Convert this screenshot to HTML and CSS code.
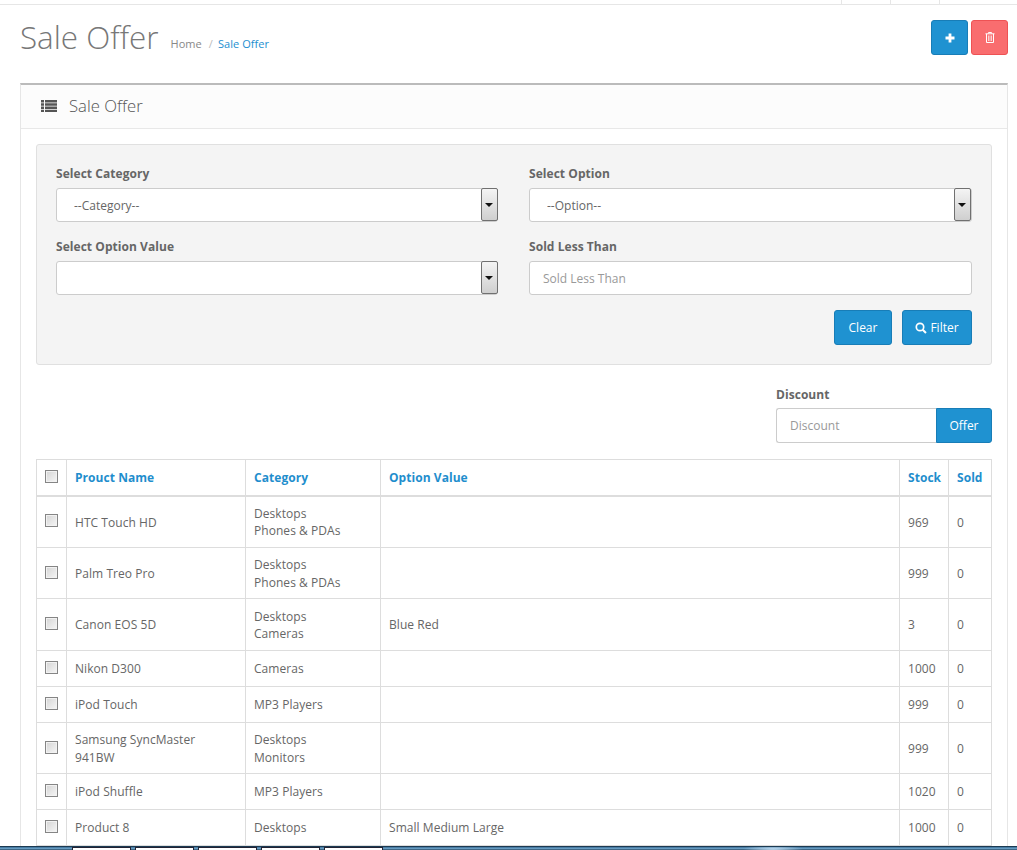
FILE: index.html
```html
<!DOCTYPE html>
<html lang="en">
<head>
  <meta charset="UTF-8" />
  <title>Sale Offer</title>
  <link rel="stylesheet" href="styles.css">
</head>
<body>
  <div class="top-bar">
    <span class="top-cell"></span>
    <span class="top-cell"></span>
    <span class="top-cell"></span>
  </div>

  <div class="content">
    <div class="page-header">
      <h1>Sale Offer</h1>
      <ul class="breadcrumb">
        <li>Home</li>
        <li class="sep">/</li>
        <li class="active">Sale Offer</li>
      </ul>
      <div class="header-actions">
        <button class="btn btn-blue btn-square">
          <svg width="10" height="10" viewBox="0 0 10 10"><path d="M3.6 0.5h2.8v3.1h3.1v2.8H6.4v3.1H3.6V6.4H0.5V3.6h3.1z" fill="#fff"/></svg>
        </button>
        <button class="btn btn-red btn-square">
          <svg width="10" height="11" viewBox="0 0 10 11"><path d="M3.5 1.5V.5h3v1M.5 1.8h9M1.5 2v8.5h7V2" fill="none" stroke="#fff"/><path d="M3.5 3.5v5.5M5 3.5v5.5M6.5 3.5v5.5" stroke="#fbd0d0"/></svg>
        </button>
      </div>
    </div>

    <div class="panel">
      <div class="panel-heading">
        <svg class="list-icon" width="16" height="12" viewBox="0 0 16 12"><path d="M0 0h3v2.5H0zM4 0h12v2.5H4zM0 3.2h3v2.6H0zM4 3.2h12v2.6H4zM0 6.5h3v2.5H0zM4 6.5h12v2.5H4zM0 9.7h3V12H0zM4 9.7h12V12H4z" fill="#555"/></svg>
        <span>Sale Offer</span>
      </div>

      <div class="panel-body">
        <div class="filter-box">
          <div class="filter-grid">
            <div class="field">
              <label>Select Category</label>
              <div class="select-wrap">
                <select><option>--Category--</option></select>
                <span class="select-arrow"></span>
              </div>
            </div>
            <div class="field">
              <label>Select Option</label>
              <div class="select-wrap">
                <select><option>--Option--</option></select>
                <span class="select-arrow"></span>
              </div>
            </div>
            <div class="field">
              <label>Select Option Value</label>
              <div class="select-wrap">
                <select><option></option></select>
                <span class="select-arrow"></span>
              </div>
            </div>
            <div class="field">
              <label>Sold Less Than</label>
              <input type="text" class="text-input" placeholder="Sold Less Than">
            </div>
          </div>
          <div class="filter-actions">
            <button class="btn btn-blue btn-clear">Clear</button>
            <button class="btn btn-blue btn-filter">
              <svg width="12" height="12" viewBox="0 0 12 12"><circle cx="5" cy="5" r="3.7" fill="none" stroke="#fff" stroke-width="1.7"/><path d="M7.7 7.7L11 11" stroke="#fff" stroke-width="2"/></svg>
              Filter
            </button>
          </div>
        </div>

        <div class="discount-row">
          <div class="discount">
            <label>Discount</label>
            <div class="input-group">
              <input type="text" class="text-input" placeholder="Discount">
              <button class="btn btn-blue btn-offer">Offer</button>
            </div>
          </div>
        </div>

        <table class="offer-table">
          <colgroup>
            <col class="c-check"><col class="c-name"><col class="c-cat"><col><col class="c-stock"><col class="c-sold">
          </colgroup>
          <thead>
            <tr>
              <th><input type="checkbox"></th>
              <th>Prouct Name</th>
              <th>Category</th>
              <th>Option Value</th>
              <th>Stock</th>
              <th>Sold</th>
            </tr>
          </thead>
          <tbody>
            <tr class="taller">
              <td><input type="checkbox"></td>
              <td>HTC Touch HD</td>
              <td>Desktops<br>Phones &amp; PDAs</td>
              <td></td><td>969</td><td>0</td>
            </tr>
            <tr class="tall">
              <td><input type="checkbox"></td>
              <td>Palm Treo Pro</td>
              <td>Desktops<br>Phones &amp; PDAs</td>
              <td></td><td>999</td><td>0</td>
            </tr>
            <tr class="taller">
              <td><input type="checkbox"></td>
              <td>Canon EOS 5D</td>
              <td>Desktops<br>Cameras</td>
              <td>Blue Red</td><td>3</td><td>0</td>
            </tr>
            <tr>
              <td><input type="checkbox"></td>
              <td>Nikon D300</td>
              <td>Cameras</td>
              <td></td><td>1000</td><td>0</td>
            </tr>
            <tr>
              <td><input type="checkbox"></td>
              <td>iPod Touch</td>
              <td>MP3 Players</td>
              <td></td><td>999</td><td>0</td>
            </tr>
            <tr class="tall">
              <td><input type="checkbox"></td>
              <td>Samsung SyncMaster<br>941BW</td>
              <td>Desktops<br>Monitors</td>
              <td></td><td>999</td><td>0</td>
            </tr>
            <tr>
              <td><input type="checkbox"></td>
              <td>iPod Shuffle</td>
              <td>MP3 Players</td>
              <td></td><td>1020</td><td>0</td>
            </tr>
            <tr>
              <td><input type="checkbox"></td>
              <td>Product 8</td>
              <td>Desktops</td>
              <td>Small Medium Large</td><td>1000</td><td>0</td>
            </tr>
          </tbody>
        </table>
      </div>
    </div>
  </div>

  <div class="taskbar">
    <span class="task"></span>
    <span class="task"></span>
    <span class="task"></span>
    <span class="task"></span>
    <span class="task"></span>
  </div>
</body>
</html>
```

FILE: styles.css
```css
* {
  box-sizing: border-box;
}

html, body {
  height: 850px;
  margin: 0;
  overflow: hidden;
}

body {
  display: flex;
  flex-direction: column;
  background: #fff;
  color: #666;
  font-family: 'Open Sans', sans-serif;
  font-size: 12px;
  letter-spacing: 0.05px;
}

/* top strip */
.top-bar {
  flex: none;
  height: 5px;
  display: flex;
  justify-content: flex-end;
  padding-right: 29px;
  border-bottom: 1px solid #e6e6e6;
}

.top-cell {
  width: 49px;
  border-left: 1px solid #e6e6e6;
}

.content {
  flex: 1;
  min-height: 0;
  overflow: hidden;
  padding: 0 9px 0 20px;
}

/* page header */
.page-header {
  height: 78px;
  display: flex;
  align-items: flex-start;
}

h1 {
  margin: 11px 0 0;
  font-size: 31.4px;
  font-weight: 300;
  line-height: 42px;
  letter-spacing: 0;
  color: #777;
}

.breadcrumb {
  list-style: none;
  display: flex;
  margin: 0;
  padding: 30px 0 0 12px;
  font-size: 11px;
  line-height: 18px;
  color: #888;
}

.breadcrumb .sep {
  margin: 0 5px 0 7px;
  color: #bbb;
}

.breadcrumb .active {
  color: #1d8fd0;
}

.header-actions {
  margin-left: auto;
  padding-top: 15px;
  display: flex;
  gap: 3px;
}

/* buttons */
.btn {
  display: inline-flex;
  align-items: center;
  justify-content: center;
  padding: 0;
  border-radius: 3px;
  font-family: inherit;
  font-size: 12px;
  color: #fff;
  cursor: pointer;
}

.btn-blue {
  background: #1f92d1;
  border: 1px solid #187db7;
}

.btn-red {
  background: #f96d6f;
  border: 1px solid #ee5254;
}

.btn-square {
  width: 37px;
  height: 35px;
}

/* panel */
.panel {
  border: 1px solid #e6e6e6;
  border-top: 2px solid #bbb;
  border-bottom: 0;
}

.panel-heading {
  height: 44px;
  display: flex;
  align-items: center;
  padding: 0 0 2px 20px;
  background: #fcfcfc;
  border-bottom: 1px solid #e8e8e8;
  font-size: 16.7px;
  font-weight: 300;
  letter-spacing: 0;
  color: #555;
}

.list-icon {
  margin-right: 12px;
}

.panel-body {
  padding: 15px 15px 0;
}

/* filter box */
.filter-box {
  height: 221px;
  padding: 20px 19px 0;
  background: #f4f4f4;
  border: 1px solid #e0e0e0;
  border-radius: 3px;
}

.filter-grid {
  display: grid;
  grid-template-columns: 442px 443px;
  column-gap: 31px;
  row-gap: 16px;
}

label {
  display: block;
  margin-bottom: 5px;
  font-weight: 700;
  line-height: 18px;
  color: #666;
}

.select-wrap {
  position: relative;
  height: 34px;
}

select {
  display: block;
  width: 100%;
  height: 34px;
  padding: 0 0 0 17px;
  appearance: none;
  background: #fff;
  border: 1px solid #ccc;
  border-radius: 3px;
  font-family: inherit;
  font-size: 12px;
  color: #666;
}

.select-arrow {
  position: absolute;
  top: 0;
  right: 0;
  width: 17px;
  height: 33px;
  background: linear-gradient(#f4f4f4, #cfcfcf);
  border: 1px solid #707070;
  border-radius: 2px;
}

.field:nth-child(2) .select-arrow {
  right: 1px;
}

.select-arrow::after {
  content: "";
  position: absolute;
  left: 3px;
  top: 14px;
  border-left: 4px solid transparent;
  border-right: 4px solid transparent;
  border-top: 4px solid #111;
}

.text-input {
  display: block;
  width: 100%;
  height: 34px;
  padding: 0 13px;
  background: #fff;
  border: 1px solid #ccc;
  border-radius: 3px;
  font-family: inherit;
  font-size: 12px;
  color: #666;
  outline: none;
}

.text-input::placeholder {
  color: #999;
  opacity: 1;
}

.filter-actions {
  display: flex;
  justify-content: flex-end;
  gap: 10px;
  padding: 15px 0 0;
}

.btn-clear {
  width: 58px;
  height: 35px;
}

.btn-filter {
  width: 70px;
  height: 35px;
  gap: 3px;
}

/* discount */
.discount-row {
  display: flex;
  justify-content: flex-end;
  padding-top: 21px;
}

.discount {
  width: 216px;
}

.discount label {
  margin-bottom: 4px;
}

.input-group {
  display: flex;
}

.input-group .text-input {
  width: 160px;
  height: 35px;
  border-radius: 3px 0 0 3px;
  border-right: 0;
}

.btn-offer {
  width: 56px;
  height: 35px;
  border-radius: 0 3px 3px 0;
}

/* table */
.offer-table {
  width: 956px;
  margin-top: 16px;
  border-collapse: collapse;
  table-layout: fixed;
}

.c-check { width: 30px; }
.c-name { width: 179px; }
.c-cat { width: 135px; }
.c-stock { width: 49px; }
.c-sold { width: 43px; }

.offer-table th,
.offer-table td {
  padding: 0 8px;
  border: 1px solid #ddd;
  text-align: left;
  line-height: 17.5px;
}

.offer-table th {
  height: 36px;
  border-bottom-width: 2px;
  font-weight: 700;
  color: #1f8ecd;
}

.offer-table td {
  height: 36px;
  padding-top: 1px;
}

.offer-table tr.tall td {
  height: 51px;
}

.offer-table tr.taller td {
  height: 52px;
}

.offer-table th:first-child,
.offer-table td:first-child {
  padding: 0 0 0 8px;
}

input[type="checkbox"] {
  display: block;
  width: 13px;
  height: 13px;
  margin: 0 0 2px;
  appearance: none;
  background: linear-gradient(135deg, #d4d4d4, #f6f6f6);
  border: 1px solid #858585;
  box-shadow: inset 0 0 0 1px #f2f2f2;
}

/* desktop taskbar at the bottom edge of the capture */
.taskbar {
  flex: none;
  height: 4px;
  display: flex;
  gap: 4px;
  padding-left: 72px;
  background:
    radial-gradient(ellipse 30px 4px at 773px 2px, #bcd8ee, transparent),
    linear-gradient(#3a6f97, #6fa3c8 60%, #1d3d57);
  border-top: 1px solid #1c3a52;
}

.task {
  width: 59px;
  background: #fff;
  border: 1px solid #223;
  border-bottom: 0;
}
```
